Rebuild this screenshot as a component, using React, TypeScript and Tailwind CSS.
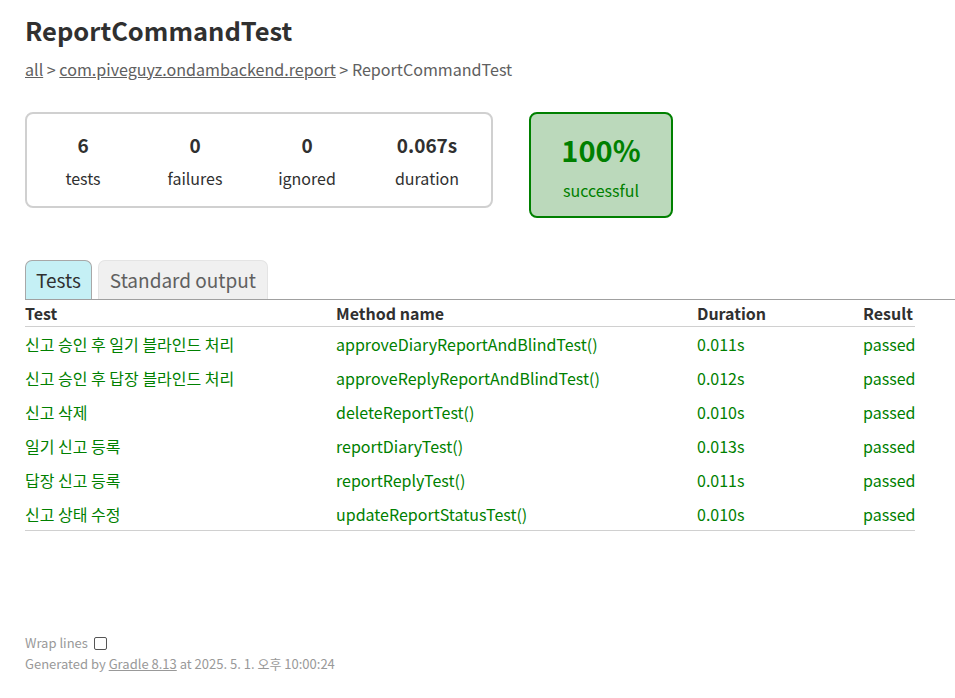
import React from "react";

const rows = [
  ["신고 승인 후 일기 블라인드 처리", "approveDiaryReportAndBlindTest()", "0.011s"],
  ["신고 승인 후 답장 블라인드 처리", "approveReplyReportAndBlindTest()", "0.012s"],
  ["신고 삭제", "deleteReportTest()", "0.010s"],
  ["일기 신고 등록", "reportDiaryTest()", "0.013s"],
  ["답장 신고 등록", "reportReplyTest()", "0.011s"],
  ["신고 상태 수정", "updateReportStatusTest()", "0.010s"],
];

const counters = [
  ["6", "tests", "w-[112px]"],
  ["0", "failures", "w-[112px]"],
  ["0", "ignored", "w-[112px]"],
  ["0.067s", "duration", "w-[128px]"],
];

export default function App() {
  return (
    <div
      className="min-h-[698px] bg-white text-[#303030] text-[16px]"
      style={{ fontFamily: '"Noto Sans CJK KR", "Noto Sans", sans-serif' }}
    >
      <div className="pl-[25px] pt-[11px]">
        <h1 className="text-[25.5px] font-bold leading-[38px] m-0">ReportCommandTest</h1>
        <div className="mt-[9px] text-[#606060] text-[16.1px] leading-[23px]">
          <span className="underline">all</span> &gt;{" "}
          <span className="underline">com.piveguyz.ondambackend.report</span> &gt; ReportCommandTest
        </div>

        <div className="mt-[31px] flex items-start">
          <div className="flex border-2 border-[#d0d0d0] rounded-[8px] h-[96px]">
            {counters.map(([n, l, w]) => (
              <div key={l} className={`${w} flex flex-col items-center pt-[17px]`}>
                <div className="text-[19px] font-bold leading-[28px]">{n}</div>
                <div className="mt-[8px] leading-[23px]">{l}</div>
              </div>
            ))}
          </div>
          <div className="ml-[36px] w-[144px] h-[106px] border-2 border-[#008000] bg-[#bbd9bb] rounded-[8px] flex flex-col items-center pt-[14px] text-[#008000]">
            <div className="text-[29px] font-bold leading-[42px]">100%</div>
            <div className="mt-[9px] leading-[23px]">successful</div>
          </div>
        </div>

        <div className="mt-[42px] flex items-end gap-[6px] border-b border-[#a0a0a0] h-[40px]">
          <div className="h-[39px] px-[10px] flex items-center bg-[#c5f0f5] border border-b-0 border-[#a8a8a8] rounded-t-[7px] text-[19px]">
            Tests
          </div>
          <div className="h-[39px] px-[11px] flex items-center bg-[#f0f0f0] border border-b-0 border-[#e4e4e4] rounded-t-[7px] text-[19px] text-[#606060]">
            Standard output
          </div>
        </div>

        <div className="w-[890px]">
          <div className="grid grid-cols-[311px_361px_166px_52px] h-[27px] items-center border-b border-[#d0d0d0] font-bold">
            <div>Test</div>
            <div>Method name</div>
            <div>Duration</div>
            <div>Result</div>
          </div>
          {rows.map(([t, m, d], i) => (
            <div
              key={m}
              className={`grid grid-cols-[311px_361px_166px_52px] h-[34px] items-center text-[#008000] ${
                i === rows.length - 1 ? "border-b border-[#d0d0d0]" : ""
              }`}
            >
              <div>{t}</div>
              <div>{m}</div>
              <div>{d}</div>
              <div>passed</div>
            </div>
          ))}
        </div>

        <div className="mt-[102px] text-[13px] text-[#999999] leading-[20px]">
          <div className="flex items-center">
            Wrap lines
            <span className="ml-[6px] inline-block w-[13px] h-[13px] border border-[#555] rounded-[2px] bg-white" />
          </div>
          <div className="mt-[1px]">
            Generated by <span className="underline">Gradle 8.13</span> at 2025. 5. 1. 오후 10:00:24
          </div>
        </div>
      </div>
    </div>
  );
}
